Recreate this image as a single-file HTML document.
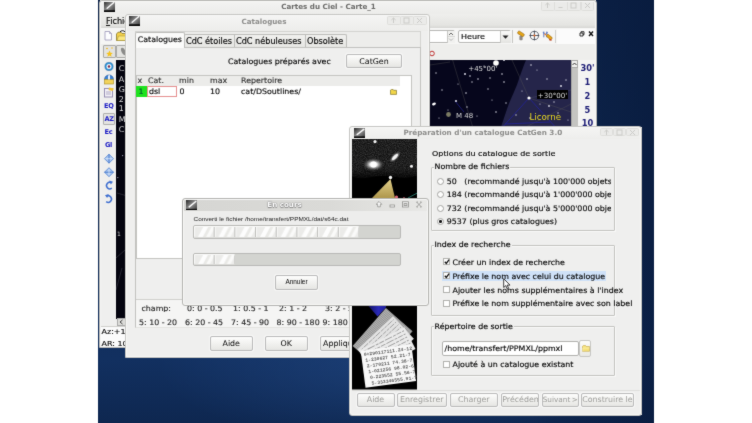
<!DOCTYPE html>
<html lang="fr">
<head>
<meta charset="utf-8">
<title>Cartes du Ciel - CatGen</title>
<style>
html,body{margin:0;padding:0;background:#fff;}
body{width:752px;height:423px;overflow:hidden;position:relative;font-family:"DejaVu Sans","Liberation Sans",sans-serif;font-size:7.9px;color:#050505;line-height:10px;}
#page,#page div,#page span.a,#page svg{position:absolute;box-sizing:border-box;}
#page{left:0;top:0;width:752px;height:423px;overflow:hidden;background:#fff;filter:url(#pgblur);}
.t{white-space:nowrap;height:10px;-webkit-text-stroke:.15px currentColor;transform:scaleY(.96);transform-origin:0 7.700px;}
.win{overflow:hidden;background:#efefee;}
.in{width:752px;height:423px;}
.frame{border:1px solid #c6c6c3;border-radius:3px 3px 0 0;box-shadow:inset 0 0 0 1px #f8f8f7;}
.ttl{font-weight:bold;font-size:7.15px;color:#8c8c8a;text-align:center;white-space:nowrap;height:10px;}
.wb{width:13.700px;height:9px;border:1px solid #dededb;border-radius:1.500px;background:#ebebe9;}
.wb svg{left:0;top:0;}
.btn{border:1px solid #bababa;border-radius:2px;background:linear-gradient(#fdfdfc,#e6e6e3);text-align:center;white-space:nowrap;overflow:hidden;box-shadow:0 0 0 1px rgba(255,255,255,.6);}
.dis{color:#9c9c99;}
.grp{border:1px solid #c3c3c0;border-radius:1px;box-shadow:inset 1px 1px 0 #fafaf9, 1px 1px 0 #fafaf9;}
.leg{background:#efefee;white-space:nowrap;height:10px;padding:0 1px;}
.cb{width:7px;height:7px;border:1px solid #b2b2ae;background:#fff;}
.rb{width:7px;height:7px;border:1px solid #a5a5a1;background:#fdfdfd;border-radius:50%;}
.ib{font-weight:bold;font-size:6.6px;color:#1c1cc4;letter-spacing:-.3px;white-space:nowrap;height:10px;}
.num{font-weight:bold;font-size:8.300px;color:#1a1a74;white-space:nowrap;height:10px;text-align:center;width:18px;}
.pb{background:linear-gradient(90deg,#bdbdba 0,#bdbdba 1px,#fbfbfa 1px,#fbfbfa 2px,rgba(0,0,0,0) 2px) -1px 0/20.700px 100% repeat-x,linear-gradient(118deg,#ebebe9 0,#ebebe9 34%,#fdfdfd 38%,#fdfdfd 52%,#e9e9e6 56%,#e9e9e6 64%,#fafaf9 68%,#fafaf9 78%,#ececea 82%) 0 0/20.700px 100% repeat-x;border-radius:1px;box-shadow:inset 0 1px 0 #fafaf9,inset 0 -1px 0 #dcdcd9;}
.sk{color:#dcdcdc;font-size:7.9px;white-space:nowrap;height:10px;}
</style>
</head>
<body>
<svg width="0" height="0" style="position:absolute"><filter id="pgblur" x="0" y="0" width="100%" height="100%" color-interpolation-filters="sRGB"><feConvolveMatrix order="3" kernelMatrix="1 4 1 4 36 4 1 4 1" divisor="56" edgeMode="duplicate" preserveAlpha="true"/></filter></svg>
<div id="page">
<!-- desktop -->
<div id="desk" style="left:98px;top:0;width:556px;height:423px;background:
 radial-gradient(ellipse 230px 80px at 290px 365px,rgba(36,76,138,.5),rgba(36,76,138,0)),
 linear-gradient(90deg,rgba(8,26,60,0) 0,rgba(8,26,60,0) 78%,rgba(8,26,60,.75) 100%),
 linear-gradient(#0c2248,#0f2850 40%,#123060 85%,#0e2750);"></div>

<!-- ================= MAIN WINDOW ================= -->
<div class="win" style="left:99.500px;top:0;width:496.500px;height:347.500px;"><div class="in" style="left:-99.500px;top:0;">
  <!-- title + menubar -->
  <div style="left:99px;top:0;width:497px;height:14px;background:linear-gradient(#f4f4f3,#ececea);"></div>
  <div style="left:99px;top:14px;width:497px;height:14px;background:linear-gradient(#efefed,#e4e4e1 80%,#d6d6d3);"></div>
  <svg style="left:104px;top:1px;" width="11" height="11" viewBox="0 0 11 11"><defs><linearGradient id="ic" x1="0" y1="0" x2="1" y2="1"><stop offset="0" stop-color="#262626"/><stop offset=".45" stop-color="#858585"/><stop offset=".6" stop-color="#7c7c7c"/><stop offset="1" stop-color="#333"/></linearGradient></defs><rect width="11" height="11" fill="url(#ic)"/><path d="M3.200 7.200L9.800 1.500" stroke="#fafafa" stroke-width="1.500" stroke-linecap="round"/><rect y="9.300" width="11" height="1.700" fill="#050505"/></svg>
  <div class="ttl" style="left:228.500px;top:1.800px;width:200px;color:#6a6a68;">Cartes du Ciel - Carte_1</div>
  <div class="wb" style="left:541px;top:.300px;height:10.400px;"><svg style="top:1.200px" width="11" height="7" viewBox="0 0 11 7"><path d="M5.5 1v5M3.4 3l2.1-2 2.1 2" stroke="#cbcbc8" stroke-width="1" fill="none"/></svg></div>
  <div class="wb" style="left:554.200px;top:.300px;height:10.400px;"><svg style="top:1.200px" width="11" height="7" viewBox="0 0 11 7"><path d="M3.5 5.5h4" stroke="#cbcbc8" stroke-width="1" fill="none"/></svg></div>
  <div class="wb" style="left:567.400px;top:.300px;height:10.400px;"><svg style="top:1.200px" width="11" height="7" viewBox="0 0 11 7"><rect x="3" y="1" width="5" height="5" stroke="#cbcbc8" stroke-width="1" fill="none"/></svg></div>
  <div class="wb" style="left:580.600px;top:.300px;height:10.400px;"><svg style="top:1.200px" width="11" height="7" viewBox="0 0 11 7"><path d="M3 1l5 5M8 1l-5 5" stroke="#cbcbc8" stroke-width="1" fill="none"/></svg></div>
  <div class="t" style="left:106px;top:16px;font-size:8.200px;"><u>F</u>ichier</div>
  <!-- toolbar 1 -->
  <div style="left:99px;top:28px;width:497px;height:16px;background:#f6f6f5;"></div>
  <svg style="left:103px;top:30px;" width="24" height="12" viewBox="0 0 24 12"><path d="M2 1.500h4.500l2 2v6.500h-6.500z" fill="#fdfdff" stroke="#9a95b8" stroke-width=".8"/><path d="M6.500 1.500v2h2" fill="none" stroke="#9a95b8" stroke-width=".7"/><path d="M13.500 10.500v-6.500l1.500-1.800h3l1 1.300h4.500v7z" fill="#f4d04a" stroke="#7a6a20" stroke-width=".7"/><path d="M14 10.500l1.500-4.500h8.500l-1.500 4.500z" fill="#fbe680" stroke="#9a8a30" stroke-width=".5"/><path d="M17 1.800c1.500-1.500 3.500-1.500 5 0" stroke="#111" stroke-width="1" fill="none"/></svg>
  <!-- toolbar 2 -->
  <div style="left:99px;top:44px;width:497px;height:16px;background:#eeeeec;"></div>
  <div style="left:102.500px;top:45.200px;width:13px;height:12.800px;border:1px solid #a9a9a6;background:#e3e3e0;border-radius:1px;"></div>
  <div style="left:116px;top:45.200px;width:13px;height:12.800px;border:1px solid #a9a9a6;background:#e3e3e0;border-radius:1px;"></div>
  <svg style="left:103.500px;top:46.200px;" width="24" height="11" viewBox="0 0 24 11"><path d="M5.500 4.500l1 2.200 2.300.2-1.800 1.500.6 2.300-2.100-1.300-2.100 1.300.6-2.300-1.800-1.500 2.300-.2z" fill="#f5c21a"/><circle cx="3" cy="2.500" r=".8" fill="#f0b000"/><circle cx="8" cy="2" r=".7" fill="#f0b000"/><ellipse cx="19.500" cy="5.500" rx="2" ry="4" transform="rotate(-25 19.500 5.500)" fill="#8a8a88"/></svg>
  <!-- left toolbar -->
  <div style="left:99px;top:60px;width:17.500px;height:266px;background:#efefee;"></div>
  <div style="left:102.500px;top:112.500px;width:12.500px;height:12.500px;border:1px solid #b0b0ad;background:#e4e4e1;border-radius:1px;"></div>
  <svg style="left:103px;top:60px;" width="12" height="146" viewBox="0 0 12 146">
    <!-- 1: eye/target -->
    <circle cx="6" cy="6.500" r="4.100" fill="#2f93d6"/><circle cx="6" cy="6.500" r="2.500" fill="#f2f6fb"/><circle cx="6" cy="6.500" r="1.200" fill="#7a2848"/><circle cx="6" cy="6.500" r="4.100" fill="none" stroke="#1b5f9c" stroke-width=".5"/>
    <!-- 2: observatory -->
    <path d="M1.500 19.500a4.500 4.500 0 0 1 9 0z" fill="#3b82d6" stroke="#1e4f94" stroke-width=".6"/><rect x="1.500" y="19.500" width="9" height="4.500" fill="#f3d35a" stroke="#a58a22" stroke-width=".6"/><path d="M5 15.500l2-.5v4.500h-2z" fill="#e8f0fb"/>
    <!-- 3: calendar -->
    <rect x="1.500" y="28.500" width="8" height="8.500" fill="#f3f1f8" stroke="#8f86ad" stroke-width=".9"/><path d="M3 32h5M3 34h5" stroke="#8f86ad" stroke-width=".7"/><path d="M6 27.500l5 1-1.500 2.500-4-1z" fill="#f4c531"/>
    <g transform="translate(0,12.200)">
    <!-- 8: flip horizontal -->
    <path d="M6 82l4.500 4.500-4.500 4.500-4.500-4.500z" fill="#a9c6f0" stroke="#4c7fd0" stroke-width=".8"/><path d="M6 82v9" stroke="#3b6fc6" stroke-width=".9"/><path d="M2.500 86.500h7" stroke="#e8f0fc" stroke-width=".7"/>
    <!-- 9: flip vertical -->
    <path d="M6 95.500l4.500 4.500-4.500 4.500-4.500-4.500z" fill="#a9c6f0" stroke="#4c7fd0" stroke-width=".8"/><path d="M1.500 100h9" stroke="#3b6fc6" stroke-width=".9"/><path d="M6 97v6" stroke="#e8f0fc" stroke-width=".7"/>
    <!-- 10: rotate cw -->
    <path d="M8.500 110.500a3.300 3.300 0 1 0 .3 5.500" fill="none" stroke="#3f6fd0" stroke-width="1.500"/><path d="M6.300 108.300l3.700 1.200-2.200 2.700z" fill="#3f6fd0"/>
    <!-- 11: rotate ccw -->
    <path d="M3.500 124a3.300 3.300 0 1 1 -.3 5.500" fill="none" stroke="#3f6fd0" stroke-width="1.500"/><path d="M5.700 121.800l-3.700 1.200 2.200 2.700z" fill="#3f6fd0"/>
    </g>
  </svg>
  <div class="ib" style="left:104px;top:100.800px;">EQ</div>
  <div class="ib" style="left:104.500px;top:114px;">AZ</div>
  <div class="ib" style="left:104.500px;top:127.300px;">Ec</div>
  <div class="ib" style="left:105px;top:140.200px;">Gl</div>
  <!-- sky left -->
  <div style="left:116px;top:60px;width:10.500px;height:258.500px;background:#04040f;"></div>
  <div class="sk" style="left:118.700px;top:63.600px;">C</div>
  <div class="sk" style="left:118.700px;top:74.500px;">A</div>
  <div class="sk" style="left:118.700px;top:84.800px;">G</div>
  <div class="sk" style="left:118.700px;top:94.500px;">2</div>
  <div class="sk" style="left:118.700px;top:104.400px;">1</div>
  <div class="sk" style="left:118.700px;top:114.800px;">M</div>
  <div class="sk" style="left:118.700px;top:124.600px;">C</div>
  <div style="left:117px;top:230px;width:9px;height:8px;color:#ccc;font-size:6px;line-height:8px;">1</div>
  <svg style="left:116px;top:140px;" width="10" height="180" viewBox="0 0 10 180"><circle cx="6.600" cy="15.600" r=".7" fill="#9a9ab0"/><circle cx="1.800" cy="37.600" r=".7" fill="#9a9ab0"/><path d="M1 53L9.500 55.500M0 150L6 128M0 118L9 110" stroke="#3c3c48" stroke-width=".6" fill="none"/></svg>
  <div style="left:116.500px;top:318px;width:10px;height:8px;background:#dcdcd9;border:1px solid #aaa;"></div>
  <svg style="left:117px;top:318px;" width="8" height="8" viewBox="0 0 8 8"><path d="M5.500 2l-2.500 2 2.500 2" stroke="#444" stroke-width="1" fill="none"/></svg>
  <!-- status -->
  <div style="left:99px;top:325.500px;width:497px;height:23px;background:#fbfbfb;border-top:1px solid #d0d0cd;"></div>
  <div class="t" style="left:101.500px;top:327.200px;font-size:8px;">Az:+12°</div>
  <div class="t" style="left:101.500px;top:339.200px;font-size:8px;">AR: 10h</div>
  <!-- spinbox -->
  <div style="left:380px;top:30px;width:75px;height:13px;border:1px solid #b8b8b5;background:#fff;border-radius:2px;"></div>
  <div style="left:446.500px;top:30.500px;width:8px;height:12px;background:#f1f1ef;border-left:1px solid #c8c8c5;"></div>
  <svg style="left:447px;top:31px;" width="8" height="11" viewBox="0 0 8 11"><path d="M2 4l2-2 2 2" stroke="#555" stroke-width=".9" fill="none"/><path d="M0 5.500h8" stroke="#c8c8c5" stroke-width=".6"/><path d="M2 7.500l2 2 2-2" stroke="#aaa" stroke-width=".9" fill="none"/></svg>
  <!-- combobox -->
  <div style="left:458px;top:30px;width:53px;height:13px;border:1px solid #b8b8b5;background:#fefefe;border-radius:2px;"></div>
  <div style="left:499.500px;top:30.500px;width:11px;height:12px;background:linear-gradient(#fafaf9,#e4e4e1);border-left:1px solid #c8c8c5;"></div>
  <svg style="left:500px;top:31px;" width="11" height="11" viewBox="0 0 11 11"><path d="M2.500 4.500h6l-3 3.300z" fill="#222"/></svg>
  <div class="t" style="left:461px;top:31.500px;font-size:8px;">Heure</div>
  <div style="left:512px;top:30px;width:1px;height:13px;background:#c4c4c1;"></div>
  <!-- toolbar icons -->
  <svg style="left:516px;top:30px;" width="38" height="13" viewBox="0 0 38 13">
    <rect x="3.400" y="5.800" width="3.200" height="4.400" rx="1" fill="#8c8782"/><rect x="1.400" y="2.300" width="7" height="3" rx="1" transform="rotate(33 4.900 3.800)" fill="#e6a616" stroke="#8a5a10" stroke-width=".5"/>
    <circle cx="18.400" cy="5.500" r="4.100" fill="#fcfcfc" stroke="#3c4450" stroke-width=".8"/><path d="M18.400 .6v9.800M13.500 5.500h9.800" stroke="#2c3440" stroke-width=".8"/><circle cx="18.400" cy="5.500" r="1.100" fill="#e86a28"/>
    <path d="M27.800 1.500v5.800M30.800 1.500v5.800M26.800 2.500l2 1M31.800 2.500l-2 1" stroke="#3c5cb4" stroke-width=".8" fill="none"/><circle cx="29.300" cy="4.400" r=".9" fill="#e87a28"/>
    <rect x="30.200" y="5.600" width="6.200" height="2.800" rx=".9" transform="rotate(40 33.300 7)" fill="#e6a616" stroke="#8a5a10" stroke-width=".5"/><path d="M33.200 9.700l2.400.400" stroke="#c03a18" stroke-width="1.200"/>
  </svg>
  <div style="left:554.500px;top:30px;width:1px;height:13px;background:#cfcfcc;"></div><div style="left:557px;top:30px;width:1px;height:13px;background:#d6d6d3;"></div>
  <div style="left:557px;top:29px;width:39px;height:15px;background:#fbfbfb;"></div>
  <svg style="left:578px;top:30px;" width="17" height="8" viewBox="0 0 17 8"><path d="M2 3h3v3h-3zM3 3v-1.300h3v3h-1" stroke="#111" stroke-width=".85" fill="none"/><path d="M11 1.500l4 4.500M15 1.500l-4 4.500" stroke="#111" stroke-width="1.400"/></svg>
  <!-- red circle in toolbar 2 -->
  <svg style="left:428.500px;top:49px;" width="8" height="9" viewBox="0 0 8 9"><circle cx="3" cy="4.500" r="2.300" fill="none" stroke="#c03030" stroke-width="1"/></svg>
  <!-- sky -->
  <svg style="left:429.500px;top:60px;" width="141" height="70" viewBox="0 0 141 70">
    <rect width="141" height="70" fill="#06061c"/>
    <path d="M96 0C92 10 90 16 88 22 84 33 80 40 77 49 74 58 72 64 70 70H141V0z" fill="#25254a"/>
    <g stroke="#5a5a58" stroke-width=".45" fill="none" opacity=".8"><path d="M22.600 0L43.600 70"/><path d="M0 5L20 2"/><path d="M82 0L99 38L141 52"/><path d="M99 38L141 30" stroke="#55556a"/><path d="M90 70L141 44"/></g>
    <g stroke="#24249c" stroke-width=".8" fill="none"><path d="M99 38L70 70"/><path d="M99 38L128 70"/><path d="M75 64L120 62"/><path d="M25 41L34 52" opacity=".8"/></g>
    <g fill="#d8d8e4">
      <circle cx="66" cy="3" r="2.800" fill="#fff"/><circle cx="74" cy="0" r="1"/><circle cx="99" cy="38" r="1.600" fill="#fff"/><ellipse cx="4" cy="44" rx="2" ry="1.200" transform="rotate(-20 4 44)" fill="#fff"/><circle cx="26" cy="41" r="1.100"/>
      <circle cx="35" cy="14" r="1"/><circle cx="40" cy="16" r=".8"/><circle cx="48" cy="19" r=".8"/><circle cx="42" cy="22" r=".7"/><circle cx="60" cy="18" r=".7"/><circle cx="72" cy="14" r=".8"/><circle cx="74" cy="22" r=".8"/>
      <circle cx="58" cy="29" r=".7"/><circle cx="36" cy="33" r=".8"/><circle cx="12" cy="30" r=".7"/><circle cx="6" cy="13" r=".7"/><circle cx="9" cy="58" r=".6"/><circle cx="66" cy="52" r=".8"/><circle cx="76" cy="43" r=".7"/>
      <circle cx="37" cy="47" r=".7"/><circle cx="47" cy="56" r=".6"/><circle cx="101" cy="5" r=".8"/><circle cx="107" cy="10" r=".6"/><circle cx="97" cy="19" r=".8"/><circle cx="117" cy="19" r=".7"/><circle cx="131" cy="26" r="1"/>
      <circle cx="136" cy="20" r=".7"/><circle cx="119" cy="46" r=".9"/><circle cx="124" cy="42" r=".7"/><circle cx="110" cy="44" r=".6"/><circle cx="86" cy="55" r=".7"/><circle cx="100" cy="58" r=".8"/><circle cx="128" cy="53" r=".7"/><circle cx="92" cy="31" r=".6"/><circle cx="112" cy="33" r=".6"/>
      <circle cx="54" cy="6" r=".6"/><circle cx="28" cy="24" r=".6"/><circle cx="18" cy="50" r=".6"/><circle cx="62" cy="40" r=".6"/><circle cx="138" cy="60" r=".6"/>
    </g>
    <circle cx="18.500" cy="54.500" r="2.400" fill="#7c7c64"/>
    <rect x="107" y="30" width="31" height="9" fill="#000"/>
    <text x="38.300" y="11.300" font-size="7" fill="#dedede" font-family="DejaVu Sans,Liberation Sans,sans-serif">+45°00'</text>
    <text x="107.700" y="37.600" font-size="7.100" fill="#dedede" font-family="DejaVu Sans,Liberation Sans,sans-serif">+30°00'</text>
    <text x="26" y="57.500" font-size="7" fill="#d8d8d8" font-family="DejaVu Sans,Liberation Sans,sans-serif">M 48</text>
    <text x="99.500" y="59.700" font-size="8.700" fill="#e8d820" font-family="DejaVu Sans,Liberation Sans,sans-serif">Licorne</text>
  </svg>
  <!-- scrollbar -->
  <div style="left:570.500px;top:60px;width:7.500px;height:70px;background:#c4c4c1;border-left:1px solid #a8a8a5;"></div>
  <div style="left:570.500px;top:60px;width:7.500px;height:8px;background:#f1f1ef;border:1px solid #a8a8a5;"></div>
  <svg style="left:571px;top:60px;" width="7" height="8" viewBox="0 0 7 8"><path d="M1.500 5l2-2 2 2" stroke="#333" stroke-width="1" fill="none"/></svg>
  <!-- right numbers -->
  <div style="left:578px;top:60px;width:18px;height:70px;background:#f4f4f3;"></div>
  <div class="num" style="left:578.500px;top:63.300px;">30'</div>
  <div class="num" style="left:578.500px;top:77px;">1</div>
  <div class="num" style="left:578.500px;top:90.500px;">2</div>
  <div class="num" style="left:578.500px;top:104.500px;">5</div>
  <div class="num" style="left:578.500px;top:118px;">10</div>
<!--MAIN-RIGHT-->
</div></div>
<div class="frame" style="left:99px;top:-.500px;width:497.500px;height:348.500px;border-color:#b9b9b6;"></div>


<!-- ================= CATALOGUES WINDOW ================= -->
<div class="win" style="left:125.500px;top:14.500px;width:304px;height:343px;"><div class="in" style="left:-125.500px;top:-14.500px;">
  <div style="left:125px;top:14px;width:306px;height:17px;background:linear-gradient(#f5f5f4,#ededeb);"></div>
  <svg style="left:129.200px;top:15.200px;" width="11" height="11" viewBox="0 0 11 11"><rect width="11" height="11" fill="url(#ic)"/><path d="M3.200 7.200L9.800 1.500" stroke="#fafafa" stroke-width="1.500" stroke-linecap="round"/><rect y="9.300" width="11" height="1.700" fill="#050505"/></svg>
  <div class="ttl" style="left:164px;top:16.500px;width:200px;">Catalogues</div>
  <div class="wb" style="left:387px;top:16px;"><svg width="11" height="7" viewBox="0 0 11 7"><path d="M5.500 1v5M3.400 3l2.100-2 2.100 2" stroke="#cbcbc8" stroke-width="1" fill="none"/></svg></div>
  <div class="wb" style="left:400px;top:16px;"><svg width="11" height="7" viewBox="0 0 11 7"><rect x="3" y="1" width="5" height="5" stroke="#cbcbc8" stroke-width="1" fill="none"/></svg></div>
  <div class="wb" style="left:413px;top:16px;"><svg width="11" height="7" viewBox="0 0 11 7"><path d="M3 1l5 5M8 1l-5 5" stroke="#cbcbc8" stroke-width="1" fill="none"/></svg></div>
  <!-- notebook -->
  <div style="left:134.500px;top:31px;width:286.500px;height:17px;border:1px solid #d3d3d0;border-bottom:0;background:#ededeb;"></div>
  <div style="left:134.500px;top:46.500px;width:286.500px;height:281px;border:1px solid #c2c2bf;border-bottom-color:#e4e4e1;background:#efefee;"></div>
  <!-- inactive tabs -->
  <div style="left:184px;top:33.500px;width:162.500px;height:13.500px;border:1px solid #bdbdba;border-bottom:0;background:linear-gradient(#f0f0ee,#e6e6e3);border-radius:2px 2px 0 0;"></div>
  <div style="left:233.500px;top:34px;width:1px;height:13px;background:#bdbdba;"></div>
  <div style="left:304.500px;top:34px;width:1px;height:13px;background:#bdbdba;"></div>
  <!-- active tab -->
  <div style="left:134.500px;top:32px;width:50px;height:16px;border:1px solid #bdbdba;border-bottom:0;background:#fbfbfa;border-radius:2px 2px 0 0;"></div>
  <div class="t" style="left:137.700px;top:34.500px;">Catalogues</div>
  <div class="t" style="left:186px;top:35.500px;font-size:8.150px;">CdC étoiles</div>
  <div class="t" style="left:236px;top:35.500px;font-size:8.150px;">CdC nébuleuses</div>
  <div class="t" style="left:307px;top:35.500px;font-size:8.150px;">Obsolète</div>
  <div class="t" style="left:228px;top:56.800px;">Catalogues préparés avec</div>
  <div class="btn" style="left:346px;top:54px;width:56px;height:14px;line-height:13px;">CatGen</div>
  <!-- grid -->
  <div style="left:135.500px;top:74.500px;width:276.500px;height:184.500px;background:#fff;border:1px solid #c4c4c1;"></div>
  <div style="left:136.500px;top:75.500px;width:263px;height:10px;background:#ececea;"></div>
  <div class="t" style="left:137.500px;top:75.500px;color:#333;">x</div>
  <div class="t" style="left:148px;top:75.500px;color:#333;">Cat.</div>
  <div class="t" style="left:179px;top:75.500px;color:#333;">min</div>
  <div class="t" style="left:210px;top:75.500px;color:#333;">max</div>
  <div class="t" style="left:241px;top:75.500px;color:#333;">Repertoire</div>
  <div style="left:136px;top:86px;width:10.500px;height:10.500px;background:#1fe21f;"></div>
  <div class="t" style="left:138.500px;top:86.500px;color:#053;">1</div>
  <div style="left:147px;top:86px;width:30px;height:10.500px;background:#fff;border:1px solid #e69090;"></div>
  <div class="t" style="left:149px;top:86.500px;">dsl</div>
  <div class="t" style="left:179.500px;top:86.500px;">0</div>
  <div class="t" style="left:210px;top:86.500px;">10</div>
  <div class="t" style="left:241px;top:86.500px;">cat/DSoutlines/</div>
  <svg style="left:390px;top:88.500px;" width="7" height="6" viewBox="0 0 8 7"><path d="M.500 6.300V1.300L1.500 .500h2l.700 1h3.300v4.800z" fill="#f2d648" stroke="#6e6420" stroke-width=".7"/></svg>
  <!-- champ rows -->
  <div style="left:135.500px;top:298.500px;width:284.500px;height:28.500px;background:#f5f5f4;border-top:1px solid #cfcfcc;"></div>
  <div style="left:135.500px;top:300.500px;width:284.500px;height:11.200px;overflow:hidden;color:#262626;-webkit-text-stroke-width:.05px;">
    <div class="t" style="left:6px;top:3px;">champ:</div>
    <div class="t" style="left:51.500px;top:3px;">0: 0 - 0.5</div>
    <div class="t" style="left:97.500px;top:3px;">1: 0.5 - 1</div>
    <div class="t" style="left:143.500px;top:3px;">2: 1 - 2</div>
    <div class="t" style="left:189.500px;top:3px;">3: 2 - 5</div>
  </div>
  <div style="left:135.500px;top:314.700px;width:284.500px;height:12px;overflow:hidden;color:#262626;">
    <div class="t" style="left:3.500px;top:3px;">5: 10 - 20</div>
    <div class="t" style="left:49.500px;top:3px;">6: 20 - 45</div>
    <div class="t" style="left:95.500px;top:3px;">7: 45 - 90</div>
    <div class="t" style="left:141px;top:3px;">8: 90 - 180</div>
    <div class="t" style="left:187px;top:3px;">9: 180 - 310</div>
  </div>
  <div style="left:126px;top:327.500px;width:304px;height:31px;background:#efefee;"></div>
  <div class="btn" style="left:210px;top:336px;width:42.500px;height:14.500px;line-height:13px;">Aide</div>
  <div class="btn" style="left:265px;top:336px;width:42.500px;height:14.500px;line-height:13px;">OK</div>
  <div class="btn" style="left:320px;top:336px;width:48px;height:14.500px;line-height:13px;text-align:left;padding-left:2px;">Appliquer</div>
</div></div>
<div class="frame" style="left:125px;top:14px;width:305px;height:344px;"></div>



<!-- ================= CATGEN WINDOW ================= -->
<div class="win" style="left:350px;top:126.500px;width:292px;height:288.500px;"><div class="in" style="left:-350px;top:-126.500px;">
  <div style="left:350px;top:126px;width:293px;height:13px;background:linear-gradient(#f5f5f4,#eeeeec);"></div>
  <svg style="left:354px;top:127.500px;" width="11" height="10" viewBox="0 0 11 11" preserveAspectRatio="none"><rect width="11" height="11" fill="url(#ic)"/><path d="M3.200 7.200L9.800 1.500" stroke="#fafafa" stroke-width="1.500" stroke-linecap="round"/><rect y="9.300" width="11" height="1.700" fill="#050505"/></svg>
  <div class="ttl" style="left:382.800px;top:127.500px;width:200px;font-size:7.240px;">Préparation d'un catalogue CatGen 3.0</div>
  <div class="wb" style="left:599.500px;top:127.500px;height:8.500px;"><svg width="11" height="7" viewBox="0 0 11 7"><path d="M5.500 1v5M3.400 3l2.100-2 2.100 2" stroke="#cbcbc8" stroke-width="1" fill="none"/></svg></div>
  <div class="wb" style="left:612.600px;top:127.500px;height:8.500px;"><svg width="11" height="7" viewBox="0 0 11 7"><rect x="3" y="1" width="5" height="5" stroke="#cbcbc8" stroke-width="1" fill="none"/></svg></div>
  <div class="wb" style="left:625.700px;top:127.500px;height:8.500px;"><svg width="11" height="7" viewBox="0 0 11 7"><path d="M3 1l5 5M8 1l-5 5" stroke="#cbcbc8" stroke-width="1" fill="none"/></svg></div>
  <!-- left picture -->
  <svg style="left:351.700px;top:139px;" width="65.300" height="250.500" viewBox="0 0 65.300 250.500" preserveAspectRatio="none">
    <defs>
      <radialGradient id="gl"><stop offset="0" stop-color="#fff"/><stop offset=".35" stop-color="#e8e8e8"/><stop offset="1" stop-color="#555" stop-opacity="0"/></radialGradient>
      <linearGradient id="bm" x1="0" y1="0" x2="0" y2="1"><stop offset="0" stop-color="#e2d08a"/><stop offset="1" stop-color="#ae964c"/></linearGradient>
      <linearGradient id="bc" x1="0" y1="0" x2="1" y2="0"><stop offset="0" stop-color="#05052a"/><stop offset=".6" stop-color="#2a2ab8"/><stop offset="1" stop-color="#1c1c8c"/></linearGradient>
      <pattern id="st" width="1.700" height="65" patternUnits="userSpaceOnUse"><rect width="1.700" height="65" fill="#b4b4b4"/><rect width=".700" height="65" fill="#8c8c8c"/></pattern>
      <filter id="nz" x="0" y="0" width="100%" height="100%"><feTurbulence type="fractalNoise" baseFrequency=".9" numOctaves="2" seed="4"/><feColorMatrix type="matrix" values="0 0 0 0 .3  0 0 0 0 .3  0 0 0 0 .3  .8 .8 .8 0 -.95"/></filter>
    </defs>
    <rect width="65" height="250.500" fill="#000"/>
    <clipPath id="skc"><path d="M0 0H65V36.500Q55 40.500 44 38 30 35.500 18 38.500 8 40.500 0 37.500z"/></clipPath>
    <path d="M0 0H65V36.500Q55 40.500 44 38 30 35.500 18 38.500 8 40.500 0 37.500z" fill="#131313"/>
    <g clip-path="url(#skc)"><rect width="65" height="42" filter="url(#nz)" opacity=".42"/></g>
    <linearGradient id="hz" x1="0" y1="0" x2="0" y2="1"><stop offset="0" stop-color="#000" stop-opacity="0"/><stop offset="1" stop-color="#000" stop-opacity=".9"/></linearGradient><rect y="29" width="65.300" height="12" fill="url(#hz)"/>
    <ellipse cx="21.500" cy="25.500" rx="10.500" ry="6.500" fill="url(#gl)"/><circle cx="21.500" cy="25.500" r="3" fill="#fff"/>
    <ellipse cx="43" cy="18" rx="7.500" ry="3.200" transform="rotate(-45 43 18)" fill="url(#gl)"/><ellipse cx="43" cy="18" rx="3.800" ry="1.300" transform="rotate(-45 43 18)" fill="#f4f4f4"/>
    <circle cx="23" cy="2.600" r="1.600" fill="#f2f2f2"/><circle cx="59.500" cy="27.300" r="1.500" fill="#f2f2f2"/><circle cx="38.500" cy="38.500" r="1.700" fill="#f4f4f4"/>
    <path d="M38.500 40L20 59H43z" fill="url(#bm)"/>
    <circle cx="44.500" cy="58" r="1.600" fill="#e06a7a"/><circle cx="52" cy="59.500" r="1.200" fill="#c85a6a"/>
    <path d="M56 59L65.300 54" stroke="#2a8a7c" stroke-width=".8"/>
    <!-- lower: cone + sheets -->
    <path d="M10.500 160H37L33.500 169 25.500 177.500z" fill="url(#bc)"/>
    <g transform="translate(.600 207) rotate(-48.800)"><rect x="0" y="0" width="50.500" height="35.400" fill="url(#st)"/></g>
    <g transform="translate(5.400 210.500) rotate(-43)"><rect x="0" y="0" width="48.700" height="30.600" fill="#e2e2e2"/><g stroke="#9c9c9c" stroke-width=".9" stroke-dasharray="3 1 6 1.200 4 1"><path d="M2 2.800h45M2 6.300h45M2 9.800h45M2 13.300h45M2 16.800h45"/></g></g>
    <g transform="translate(7 211.500) rotate(-27)"><rect x="0" y="0" width="51" height="24.400" fill="#ebebeb"/><g stroke="#9a9a9a" stroke-width=".9" stroke-dasharray="5 1.200 8 1.200 3 1"><path d="M2 2.800h47M2 6.300h47M2 9.800h47M2 13.300h47M2 16.800h47"/></g></g>
    <g transform="translate(8.700 212) rotate(-7.500)"><rect x="0" y="0" width="51" height="37" fill="#f8f8f8"/>
      <g font-family="Liberation Mono,DejaVu Sans Mono,monospace" font-size="4.800" font-weight="bold" fill="#5c5c5c">
        <text x="2.500" y="5.500">0+290117111.24-12</text>
        <text x="3.300" y="11.400">1-230627 52.21-7</text>
        <text x="4.100" y="17.300">2-170211 74.38-7</text>
        <text x="4.900" y="23.200">1-021256 98.02-6</text>
        <text x="5.700" y="29.100">0-223552 55.56-7</text>
        <text x="6.500" y="35">5-333346555.91-7</text>
      </g></g>
  </svg>

  <div class="t" style="left:432px;top:148.600px;font-size:8px;">Options du catalogue de sortie</div>
  <!-- group 1 -->
  <div class="grp" style="left:431px;top:167px;width:184px;height:63.500px;"></div>
  <div class="leg t" style="left:433.500px;top:162.200px;">Nombre de fichiers</div>
  <div style="left:436px;top:175.500px;width:174.500px;height:52px;overflow:hidden;">
    <div class="rb" style="left:1px;top:2.300px;"></div><div class="t" style="left:10.800px;top:1.500px;">50&nbsp;&nbsp; (recommandé jusqu'à 100'000 objets)</div>
    <div class="rb" style="left:1px;top:15.600px;"></div><div class="t" style="left:10.800px;top:14.800px;">184 (recommandé jusqu'à 1'000'000 objets)</div>
    <div class="rb" style="left:1px;top:29px;"></div><div class="t" style="left:10.800px;top:28.200px;">732 (recommandé jusqu'à 5'000'000 objets)</div>
    <div class="rb" style="left:1px;top:42.300px;"></div><div style="left:3.200px;top:44.500px;width:2.600px;height:2.600px;border-radius:50%;background:#111;"></div><div class="t" style="left:10.800px;top:41.500px;">9537 (plus gros catalogues)</div>
  </div>
  <!-- group 2 -->
  <div class="grp" style="left:431px;top:245px;width:184px;height:70.800px;"></div>
  <div class="leg t" style="left:433.500px;top:239.900px;">Index de recherche</div>
  <div style="left:442px;top:271px;width:164px;height:10px;background:#cfe1f8;"></div>
  <div class="cb" style="left:443px;top:258.050px;"></div><div class="t" style="left:452.500px;top:258.100px;">Créer un index de recherche</div>
  <div class="cb" style="left:443px;top:272.200px;"></div><div class="t" style="left:452.500px;top:271.800px;">Préfixe le nom avec celui du catalogue</div>
  <div class="cb" style="left:443px;top:286.150px;"></div><div class="t" style="left:452.500px;top:285.500px;">Ajouter les noms supplémentaires à l'index</div>
  <div class="cb" style="left:443px;top:300px;"></div><div class="t" style="left:452.500px;top:298.800px;">Préfixe le nom supplémentaire avec son label</div>
  <svg style="left:443px;top:257.900px;" width="8" height="22" viewBox="0 0 8 22"><path d="M1.800 3.800l1.500 1.700 2.800-3.800" stroke="#111" stroke-width="1.300" fill="none"/><path d="M1.800 17.800l1.500 1.700 2.800-3.800" stroke="#111" stroke-width="1.300" fill="none"/></svg>
  <!-- cursor -->
  <svg style="left:502.500px;top:277.500px;" width="8" height="12" viewBox="0 0 8 12"><path d="M.700 .700v8.800l2.100-1.900 1.400 3.300 1.400-.600-1.400-3.200h2.800z" fill="#fff" stroke="#111" stroke-width=".8"/></svg>
  <!-- group 3 -->
  <div class="grp" style="left:431px;top:326px;width:184px;height:50px;"></div>
  <div class="leg t" style="left:433.500px;top:321.500px;">Répertoire de sortie</div>
  <div style="left:442px;top:340.700px;width:136.500px;height:15.600px;border:1px solid #b2b2af;border-radius:2px;background:#fff;"></div>
  <div class="t" style="left:444.500px;top:343.500px;">/home/transfert/PPMXL/ppmxl</div>
  <div style="left:579.200px;top:340.400px;width:12.200px;height:16.200px;border:1px solid #c6c6c3;border-radius:2px;background:linear-gradient(#fcfcfb,#e8e8e5);"></div>
  <svg style="left:581.500px;top:345px;" width="8" height="7" viewBox="0 0 8 7"><path d="M.500 6.300V1.300L1.500 .500h2l.700 1h3.300v4.800z" fill="#f6e27c" stroke="#c4a848" stroke-width=".6"/><path d="M.800 6V3h6.500" fill="none" stroke="#fdf4b8" stroke-width=".6"/></svg>
  <div class="cb" style="left:443px;top:361px;"></div><div class="t" style="left:452.500px;top:359.800px;">Ajouté à un catalogue existant</div>
  <div style="left:352px;top:389.500px;width:288px;height:1px;background:#dfdfdc;"></div>
  <div style="left:639.500px;top:139px;width:1px;height:274px;background:#e0e0dd;"></div>
  <!-- bottom buttons -->
  <div class="btn dis" style="left:356.500px;top:392.500px;width:38px;height:14px;line-height:12px;">Aide</div>
  <div class="btn dis" style="left:397px;top:392.500px;width:49.500px;height:14px;line-height:12px;">Enregistrer</div>
  <div class="btn dis" style="left:449.500px;top:392.500px;width:48.500px;height:14px;line-height:12px;">Charger</div>
  <div class="btn dis" style="left:501px;top:392.500px;width:38px;height:14px;line-height:12px;text-align:left;padding-left:.200px;">Précédent</div>
  <div class="btn dis" style="left:541.500px;top:392.500px;width:37.500px;height:14px;line-height:12px;text-align:left;padding-left:.200px;font-size:7.300px;word-spacing:-.800px;">Suivant &gt;</div>
  <div class="btn dis" style="left:581px;top:392.500px;width:53px;height:14px;line-height:12px;text-align:left;padding-left:.200px;">Construire le catalogue</div>
</div></div>
<div class="frame" style="left:349.400px;top:126px;width:293.100px;height:289.500px;border-radius:3px;"></div>



<!-- ================= PROGRESS WINDOW ================= -->
<div class="win" style="left:182.500px;top:198.500px;width:245.500px;height:106.500px;background:#ededec;"><div class="in" style="left:-182.500px;top:-198.500px;">
  <div style="left:182px;top:198px;width:247px;height:12.500px;background:linear-gradient(90deg,#d6d6d3,#dadad7 60%,#e8e8e6);"></div>
  <svg style="left:186px;top:199.500px;" width="11" height="10.500" viewBox="0 0 11 11" preserveAspectRatio="none"><rect width="11" height="11" fill="url(#ic)"/><path d="M3.200 7.200L9.800 1.500" stroke="#fafafa" stroke-width="1.500" stroke-linecap="round"/><rect y="9.300" width="11" height="1.700" fill="#050505"/></svg>
  <div class="ttl" style="left:184.500px;top:199.500px;width:200px;color:#fdfdfd;text-shadow:0 0 1px #777,0 0 1px #777,0 .5px 1px #888;">En cours</div>
  <svg style="left:374px;top:200px;" width="52" height="9" viewBox="0 0 52 9" fill="#fafafa" stroke="#8f8f8c" stroke-width=".8">
    <path d="M5 1.500l2.800 2.800h-1.500v2.500h-2.600v-2.500h-1.500z"/>
    <rect x="16" y="5" width="4.500" height="2"/>
    <rect x="28.500" y="1.800" width="6" height="5.200"/><rect x="30" y="3.600" width="3" height="2" fill="#dcdcda"/>
    <path d="M42.500 2l5 5M47.500 2l-5 5M42.500 2h1.500M46 2h1.500M42.500 7h1.500M46 7h1.500"/>
  </svg>
  <div class="t" style="left:193.500px;top:213.500px;font-family:'Liberation Sans','DejaVu Sans',sans-serif;font-size:6.430px;color:#1a1a1a;-webkit-text-stroke:0;">Converti le fichier /home/transfert/PPMXL/dat/s64c.dat</div>
  <!-- bar 1 -->
  <div style="left:193px;top:225px;width:207.500px;height:13.500px;border:1px solid #b9b9b6;border-radius:2px;background:#d3d4d0;"></div>
  <div class="pb" style="left:194px;top:226px;width:164.500px;height:11.500px;"></div>
  <!-- bar 2 -->
  <div style="left:193px;top:252.500px;width:207.500px;height:13.500px;border:1px solid #b9b9b6;border-radius:2px;background:#d3d4d0;"></div>
  <div class="pb" style="left:194px;top:253.500px;width:40.500px;height:11.500px;"></div>
  <div class="btn" style="left:275px;top:275px;width:43px;height:14.500px;line-height:12.500px;font-family:'Liberation Sans','DejaVu Sans',sans-serif;font-size:6.430px;">Annuler</div>
</div></div>
<div class="frame" style="left:182px;top:198px;width:246.500px;height:107.500px;border-color:#b4b4b1;border-radius:3px;"></div>


</div>
</body>
</html>
